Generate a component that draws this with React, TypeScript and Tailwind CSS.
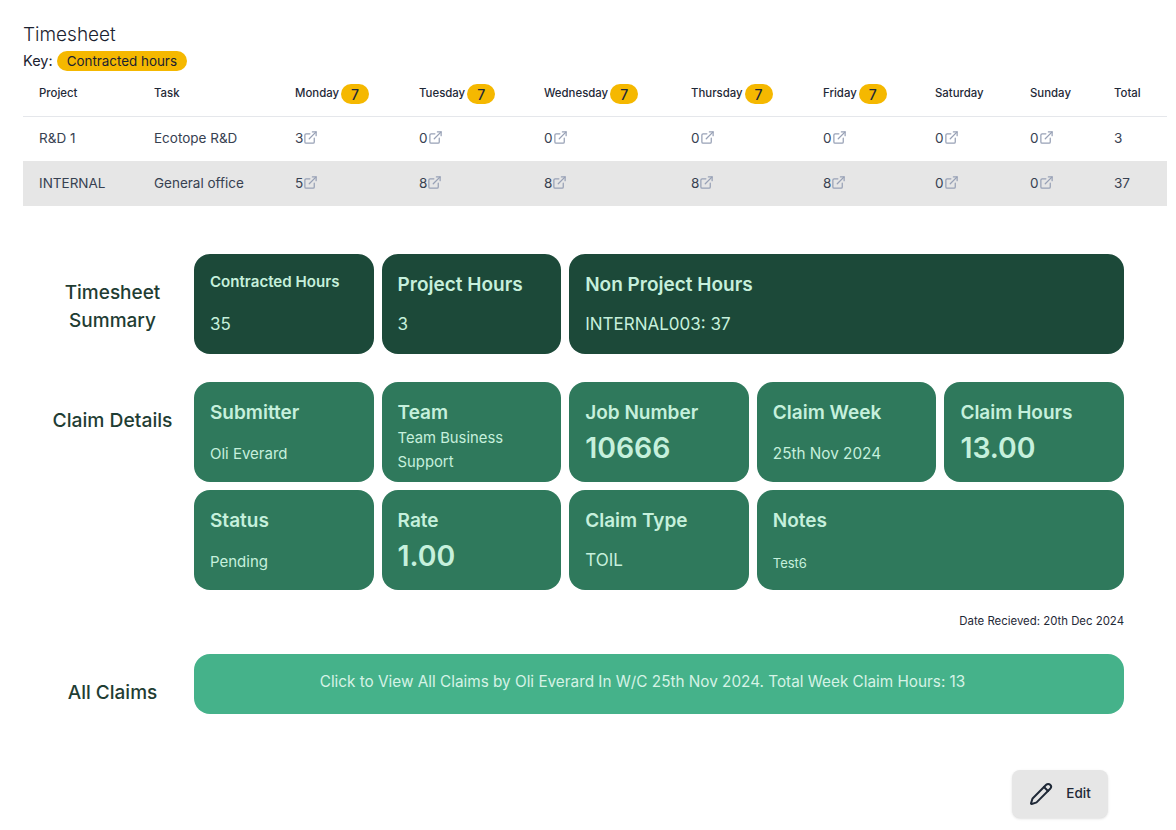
import { ExternalLink, Pencil } from "lucide-react";

const gridCols = "grid grid-cols-[115px_141px_124px_125px_147px_132px_112px_95px_84px_1fr] items-center";

function Badge({ children }: { children: React.ReactNode }) {
  return (
    <span className="ml-[2px] inline-flex h-5 w-[28px] items-center justify-center rounded-full bg-[#f5b800] text-[14px] font-medium text-[#1f2937]">
      {children}
    </span>
  );
}

function Hours({ value }: { value: number }) {
  return (
    <div className="flex items-center">
      <span>{value}</span>
      <ExternalLink className="mb-[3px] h-[15px] w-[15px] text-[#98a1b6]" strokeWidth={2} />
    </div>
  );
}

const days = [
  { name: "Monday", contracted: true },
  { name: "Tuesday", contracted: true },
  { name: "Wednesday", contracted: true },
  { name: "Thursday", contracted: true },
  { name: "Friday", contracted: true },
  { name: "Saturday", contracted: false },
  { name: "Sunday", contracted: false },
];

const rows = [
  { project: "R&D 1", task: "Ecotope R&D", hours: [3, 0, 0, 0, 0, 0, 0], total: 3, shade: false },
  { project: "INTERNAL", task: "General office", hours: [5, 8, 8, 8, 8, 0, 0], total: 37, shade: true },
];

function Card({
  title,
  children,
  className = "",
  titleClass = "mt-[17px] text-[19px] leading-[27px]",
}: {
  title: string;
  children: React.ReactNode;
  className?: string;
  titleClass?: string;
}) {
  return (
    <div className={`flex h-[100px] flex-col rounded-[16px] px-4 text-[#c6f0dc] ${className}`}>
      <div className={`font-semibold ${titleClass}`}>{title}</div>
      {children}
    </div>
  );
}

export default function App() {
  return (
    <main className="min-h-[830px] bg-white font-['Inter','Liberation_Sans',sans-serif] text-[#1f2937]">
      <div className="pl-[23px] pr-[9px] pt-[23px]">
        <h1 className="text-[19px] leading-[24px] font-light text-[#1b2230]">Timesheet</h1>
        <div className="mt-[4px] flex h-5 items-center text-[14.5px] text-[#1b2230]">
          Key:
          <span className="ml-[4px] inline-flex h-5 items-center rounded-full bg-[#f5b800] px-[10px] pb-[1px] text-[13.4px] leading-5 font-normal">
            Contracted hours
          </span>
        </div>

        <div className={`${gridCols} h-[46px] border-b border-[#e5e7eb] pt-[1px] pl-4 text-[11.4px] font-medium text-[#1f2937]`}>
          <div>Project</div>
          <div>Task</div>
          {days.map((d) => (
            <div key={d.name} className="flex items-center">
              {d.name}
              {d.contracted && <Badge>7</Badge>}
            </div>
          ))}
          <div>Total</div>
        </div>

        {rows.map((r) => (
          <div
            key={r.project}
            className={`${gridCols} pl-4 text-[13.5px] text-[#374151] ${r.shade ? "h-[45px] bg-[#e6e6e6]" : "h-[44px] pb-[1px]"}`}
          >
            <div>{r.project}</div>
            <div>{r.task}</div>
            {r.hours.map((h, i) => (
              <Hours key={i} value={h} />
            ))}
            <div>{r.total}</div>
          </div>
        ))}
      </div>

      <section className="mt-[48px] grid grid-cols-[135px_930px] gap-x-[14px] pl-[45px]">
        <div className="flex h-[100px] items-center justify-center pt-[6px] text-center text-[19px] leading-[28px] font-medium text-[#1f3d33]">
          Timesheet
          <br />
          Summary
        </div>
        <div className="grid grid-cols-5 gap-2">
          <Card title="Contracted Hours" titleClass="mt-[14px] text-[15.1px] leading-[27px]" className="bg-[#1c4939]">
            <div className="mt-auto mb-[18px] text-[17px] leading-6">35</div>
          </Card>
          <Card title="Project Hours" className="bg-[#1c4939]">
            <div className="mt-auto mb-[18px] text-[17px] leading-6">3</div>
          </Card>
          <Card title="Non Project Hours" className="col-span-3 bg-[#1c4939]">
            <div className="mt-auto mb-[18px] text-[17px] leading-6">INTERNAL003: 37</div>
          </Card>
        </div>

        <div className="mt-[28px] flex h-[100px] items-center justify-center pb-[24px] text-center text-[19.3px] font-medium whitespace-nowrap text-[#1f3d33]">
          Claim Details
        </div>
        <div className="mt-[28px] grid grid-cols-5 gap-2">
          <Card title="Submitter" className="bg-[#2f795c]">
            <div className="mt-auto mb-[16px] text-[15px] leading-6">Oli Everard</div>
          </Card>
          <Card title="Team" className="bg-[#2f795c]">
            <div className="text-[14.8px] leading-6">
              Team Business
              <br />
              Support
            </div>
          </Card>
          <Card title="Job Number" className="bg-[#2f795c]">
            <div className="mt-[3px] text-[28.4px] leading-[38px] font-semibold">10666</div>
          </Card>
          <Card title="Claim Week" className="bg-[#2f795c]">
            <div className="mt-auto mb-[16px] text-[15.3px] leading-6">25th Nov 2024</div>
          </Card>
          <Card title="Claim Hours" className="bg-[#2f795c]">
            <div className="mt-[3px] text-[28.4px] leading-[38px] font-semibold">13.00</div>
          </Card>
          <Card title="Status" className="bg-[#2f795c]">
            <div className="mt-auto mb-[16px] text-[15px] leading-6">Pending</div>
          </Card>
          <Card title="Rate" className="bg-[#2f795c]">
            <div className="mt-[3px] text-[28.4px] leading-[38px] font-semibold">1.00</div>
          </Card>
          <Card title="Claim Type" className="bg-[#2f795c]">
            <div className="mt-auto mb-[18px] text-[17px] leading-6">TOIL</div>
          </Card>
          <Card title="Notes" className="col-span-2 bg-[#2f795c]">
            <div className="mt-auto mb-[15px] text-[13px] leading-6">Test6</div>
          </Card>
        </div>

        <div />
        <div className="mt-[23px] text-right text-[11.4px] leading-4 text-[#1f2937]">Date Recieved: 20th Dec 2024</div>

        <div className="mt-[25px] flex h-[60px] items-center justify-center pt-[18px] text-[19px] font-medium text-[#1f3d33]">
          All Claims
        </div>
        <div className="mt-[25px] flex h-[60px] items-start justify-center rounded-[16px] bg-[#45b28a] pt-[16px] pr-[33px] text-[15.3px] leading-6 text-[#d6f3e6]">
          Click to View All Claims by Oli Everard In W/C 25th Nov 2024. Total Week Claim Hours: 13
        </div>
      </section>

      <div className="mt-[56px] flex justify-end pr-[68px]">
        <button className="flex h-[48px] w-[96px] items-center justify-center gap-[13px] rounded-lg bg-[#e6e6e6] pb-[1px] text-[13.5px] font-medium text-[#1f2937] shadow-sm">
          <Pencil className="h-[24px] w-[24px]" strokeWidth={2} />
          Edit
        </button>
      </div>
    </main>
  );
}
